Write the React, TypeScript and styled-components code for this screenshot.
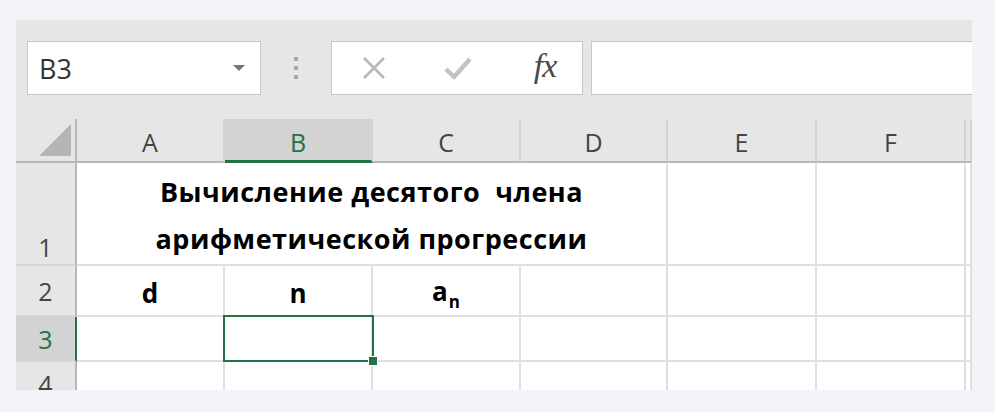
import React from 'react';
import styled, { createGlobalStyle, css } from 'styled-components';

const GREEN = '#217346';
const GRID = '#e0e0e0';

const GlobalStyle = createGlobalStyle`
  html, body {
    margin: 0;
    padding: 0;
    background: #f3f3f7;
  }
  body {
    font-family: "Open Sans", "Noto Sans", sans-serif;
  }
`;

const Page = styled.div`
  padding: 20px 23px 0 16px;
  height: 412px;
  box-sizing: border-box;
`;

const Sheet = styled.div`
  width: 956px;
  height: 370px;
  background: #e6e6e6;
  overflow: hidden;
`;

const Toolbar = styled.div`
  display: flex;
  align-items: center;
  height: 99px;
  padding: 0 0 3px 11px;
  box-sizing: border-box;
`;

const NameBox = styled.div`
  width: 234px;
  height: 54px;
  box-sizing: border-box;
  background: #fff;
  border: 1px solid #c6c6c6;
  display: flex;
  align-items: center;
  justify-content: space-between;
  padding: 0 15px 0 11px;
  font-size: 27px;
  color: #333;
`;

const Caret = styled.span`
  width: 0;
  height: 0;
  border-left: 6px solid transparent;
  border-right: 6px solid transparent;
  border-top: 6px solid #777;
`;

const Grip = styled.div`
  width: 70px;
  display: flex;
  flex-direction: column;
  align-items: center;
  gap: 5px;
  span {
    width: 4px;
    height: 4px;
    background: #a8a8a8;
  }
`;

const FormulaButtons = styled.div`
  width: 252px;
  height: 54px;
  box-sizing: border-box;
  background: #fff;
  border: 1px solid #c6c6c6;
  display: grid;
  grid-template-columns: 84px 84px 84px;
  align-items: center;
  justify-items: center;
`;

const Fx = styled.span`
  font-family: "Liberation Serif", "DejaVu Serif", serif;
  font-style: italic;
  font-size: 34px;
  color: #4a4a4a;
  margin-top: -4px;
  margin-left: 6px;
  letter-spacing: -1px;
`;

const FormulaInput = styled.div`
  flex: 1;
  height: 54px;
  margin-left: 8px;
  box-sizing: border-box;
  background: #fff;
  border: 1px solid #c6c6c6;
  border-right: none;
`;

const Grid = styled.div`
  display: grid;
  grid-template-columns: 61px 148px 148px 148px 147px 149px 149px 1fr;
  grid-template-rows: 44px 103px 51px 45px 45px;
  background: #fff;
`;

const Corner = styled.div`
  background: #e6e6e6;
  border-right: 2px solid #b7b7b7;
  border-bottom: 2px solid #b7b7b7;
  display: flex;
  align-items: flex-end;
  justify-content: flex-end;
  padding: 0 4px 5px 0;
  svg { display: block; }
`;

const ColHead = styled.div<{ $active?: boolean }>`
  background: #e6e6e6;
  border-right: 2px solid #d2d2d2;
  border-bottom: 2px solid #b7b7b7;
  display: flex;
  align-items: center;
  justify-content: center;
  padding-top: 4px;
  font-size: 25px;
  color: #444;
  ${p => p.$active && css`
    background: #d3d3d3;
    color: ${GREEN};
    border-bottom: 3px solid ${GREEN};
  `}
`;

const RowHead = styled.div<{ $active?: boolean; $bottom?: boolean }>`
  background: #e6e6e6;
  border-right: 2px solid #b7b7b7;
  border-bottom: 2px solid #d6d6d6;
  display: flex;
  align-items: ${p => (p.$bottom ? 'flex-end' : 'center')};
  justify-content: center;
  padding-bottom: ${p => (p.$bottom ? '2px' : '0')};
  font-size: 25px;
  line-height: 1.2;
  color: #444;
  ${p => p.$active && css`
    background: #d3d3d3;
    color: ${GREEN};
    border-right: 2px solid ${GREEN};
  `}
`;

const Cell = styled.div<{ $span?: number }>`
  position: relative;
  grid-column: span ${p => p.$span ?? 1};
  border-right: 2px solid ${GRID};
  border-bottom: 2px solid ${GRID};
  display: flex;
  align-items: center;
  justify-content: center;
  padding-top: 5px;
  font-family: "Open Sans", "Noto Sans", sans-serif;
  font-weight: 700;
  font-size: 26px;
  color: #000;
`;

const TitleCell = styled(Cell)`
  flex-direction: column;
  justify-content: flex-end;
  align-items: center;
  padding: 0 0 2px;
  font-size: 27px;
  line-height: 47px;
  white-space: nowrap;
  letter-spacing: 0.5px;
`;

const Selected = styled.div`
  position: absolute;
  z-index: 2;
  left: -2px;
  top: -2px;
  right: -3px;
  bottom: -2px;
  border: 2px solid ${GREEN};
`;

const FillHandle = styled.div`
  position: absolute;
  z-index: 3;
  right: -7px;
  bottom: -6px;
  width: 10px;
  height: 10px;
  box-sizing: border-box;
  background: ${GREEN};
  border: 1px solid #fff;
`;

const Sub = styled.sub`
  font-size: 17px;
  vertical-align: -7px;
  margin-left: 1px;
`;

const cols = ['A', 'B', 'C', 'D', 'E', 'F'];

const App: React.FC = () => (
  <Page>
    <GlobalStyle />
    <Sheet>
      <Toolbar>
        <NameBox>
          <span>B3</span>
          <Caret />
        </NameBox>
        <Grip>
          <span />
          <span />
          <span />
        </Grip>
        <FormulaButtons>
          <svg width="26" height="26" viewBox="0 0 26 26">
            <path d="M3 3 L23 23 M23 3 L3 23" stroke="#b8b8b8" strokeWidth="2.6" fill="none" />
          </svg>
          <svg width="30" height="26" viewBox="0 0 30 26">
            <path d="M3 14 L11 22 L27 4" stroke="#c2c2c2" strokeWidth="4.5" fill="none" strokeLinejoin="round" />
          </svg>
          <Fx>fx</Fx>
        </FormulaButtons>
        <FormulaInput />
      </Toolbar>

      <Grid>
        <Corner>
          <svg width="32" height="32" viewBox="0 0 32 32">
            <path d="M32 0 L32 32 L0 32 Z" fill="#b5b5b5" />
          </svg>
        </Corner>
        {cols.map(c => (
          <ColHead key={c} $active={c === 'B'}>{c}</ColHead>
        ))}
        <ColHead />

        <RowHead $bottom>1</RowHead>
        <TitleCell $span={4}>
          <div>Вычисление десятого&nbsp; члена</div>
          <div>арифметической прогрессии</div>
        </TitleCell>
        <Cell />
        <Cell />
        <Cell />

        <RowHead>2</RowHead>
        <Cell>d</Cell>
        <Cell>n</Cell>
        <Cell>
          <span>a<Sub>n</Sub></span>
        </Cell>
        <Cell />
        <Cell />
        <Cell />
        <Cell />

        <RowHead $active>3</RowHead>
        <Cell />
        <Cell>
          <Selected />
          <FillHandle />
        </Cell>
        <Cell />
        <Cell />
        <Cell />
        <Cell />
        <Cell />

        <RowHead>4</RowHead>
        <Cell />
        <Cell />
        <Cell />
        <Cell />
        <Cell />
        <Cell />
        <Cell />
      </Grid>
    </Sheet>
  </Page>
);

export default App;
